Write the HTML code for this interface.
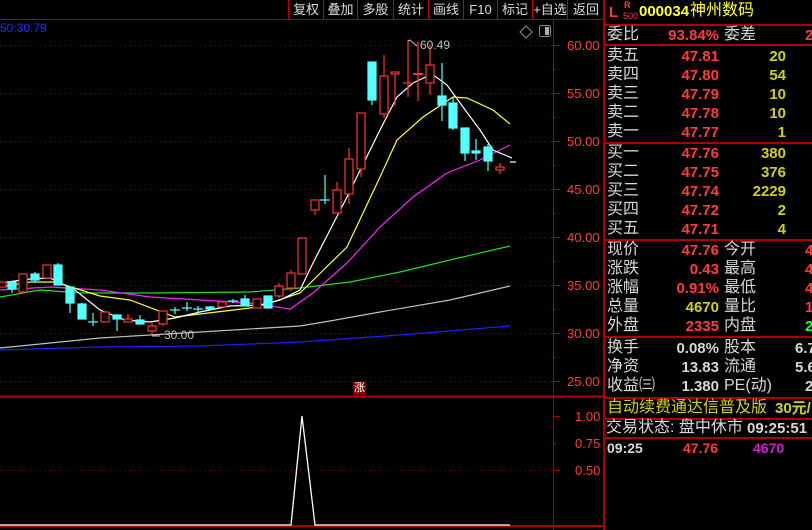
<!DOCTYPE html>
<html><head><meta charset="utf-8">
<style>
*{margin:0;padding:0;box-sizing:border-box}
body{width:812px;height:530px;background:#000;overflow:hidden;position:relative;font-family:"Liberation Sans","Noto Sans CJK SC",sans-serif;}
.t{position:absolute;white-space:nowrap;line-height:1;}
.tb{position:absolute;top:0;height:19px;color:#ddd;font-size:13px;line-height:19px;text-align:center;border-left:1px solid #c00;}
.lab{position:absolute;left:607px;color:#d8d8d8;font-size:16px;line-height:1;}
.lab2{position:absolute;left:724px;color:#d8d8d8;font-size:16px;line-height:1;}
.v{position:absolute;right:93px;font-size:15px;font-weight:bold;line-height:1;text-align:right;}
.n{position:absolute;right:26px;font-size:15px;font-weight:bold;line-height:1;text-align:right;color:#d0d020;}
.c{position:absolute;left:805px;font-size:15px;font-weight:bold;line-height:1;}
.hl{position:absolute;left:604px;width:208px;height:2px;background:#b00000;}
.r{color:#ff3c3c}.y{color:#d0d020}.w{color:#d8d8d8}.g{color:#20ff20}.m{color:#d020d0}
</style></head><body>
<svg width="812" height="530" style="position:absolute;left:0;top:0">
<g stroke="#800000" stroke-width="1" stroke-dasharray="1,4">
<line x1="0" y1="45.5" x2="553" y2="45.5"/><line x1="0" y1="93.5" x2="553" y2="93.5"/>
<line x1="0" y1="141.5" x2="553" y2="141.5"/><line x1="0" y1="189.5" x2="553" y2="189.5"/>
<line x1="0" y1="237.5" x2="553" y2="237.5"/><line x1="0" y1="285.5" x2="553" y2="285.5"/>
<line x1="0" y1="333.5" x2="553" y2="333.5"/><line x1="0" y1="381.5" x2="553" y2="381.5"/>
<line x1="0" y1="470.5" x2="553" y2="470.5"/>
</g>
<line x1="0" y1="19.5" x2="604" y2="19.5" stroke="#b00000"/>
<line x1="0" y1="396.5" x2="604" y2="396.5" stroke="#b00000" stroke-width="2"/>
<line x1="0" y1="526" x2="604" y2="526" stroke="#b00000" stroke-width="2"/>
<line x1="553.5" y1="19" x2="553.5" y2="530" stroke="#b00000"/>
<line x1="604" y1="0" x2="604" y2="530" stroke="#b00000" stroke-width="2"/>
<g stroke="#b00000">
<line x1="553" y1="45.5" x2="560" y2="45.5"/><line x1="553" y1="93.5" x2="560" y2="93.5"/>
<line x1="553" y1="141.5" x2="560" y2="141.5"/><line x1="553" y1="189.5" x2="560" y2="189.5"/>
<line x1="553" y1="237.5" x2="560" y2="237.5"/><line x1="553" y1="285.5" x2="560" y2="285.5"/>
<line x1="553" y1="333.5" x2="560" y2="333.5"/><line x1="553" y1="381.5" x2="560" y2="381.5"/>
<line x1="553" y1="416.5" x2="560" y2="416.5"/><line x1="553" y1="470.5" x2="560" y2="470.5"/>
<line x1="553" y1="69.5" x2="556" y2="69.5"/><line x1="553" y1="117.5" x2="556" y2="117.5"/>
<line x1="553" y1="165.5" x2="556" y2="165.5"/><line x1="553" y1="213.5" x2="556" y2="213.5"/>
<line x1="553" y1="261.5" x2="556" y2="261.5"/><line x1="553" y1="309.5" x2="556" y2="309.5"/>
<line x1="553" y1="357.5" x2="556" y2="357.5"/><line x1="553" y1="443.5" x2="556" y2="443.5"/>
</g>
<!-- icons -->
<path d="M526 26 L532 32 L526 38 L520 32 Z" fill="none" stroke="#909090"/>
<rect x="539.5" y="25.5" width="11" height="11" rx="2" fill="none" stroke="#909090"/>
<rect x="545" y="27" width="4" height="8" fill="#b0b0b0"/>
<!-- MA lines -->
<g fill="none" stroke-width="1.2">
<polyline stroke="#c0c0c0" points="0,348 100,338 200,332 300,326 330,321 380,312 450,300 510,286"/>
<polyline stroke="#2020ff" points="0,350 100,347 200,346 300,342 400,335 510,326"/>
<polyline stroke="#20e020" points="0,297 40,290 80,293 150,293 250,292 300,288 350,282 400,272 450,260 510,246"/>
<polyline stroke="#ff20ff" points="0,290 50,287 100,290 150,297 200,300 250,303 290,309 313,293 347,263 380,227 413,197 447,173 480,160 510,145"/>
<polyline stroke="#ffff30" points="0,287 30,282 55,282 100,296 130,300 175,317 200,314 250,308 270,303 300,293 347,247 380,177 397,140 423,117 453,97 467,98 493,110 510,124"/>
<polyline stroke="#ffffff" points="0,283 30,279 50,278 75,290 100,310 125,320 150,322 175,318 200,312 230,306 260,305 280,300 300,290 313,263 347,197 380,130 397,97 413,83 432,74 447,85 463,107 480,130 493,150 512,158"/>
</g>
<!-- candles -->
<g stroke-width="1.2">
<g stroke="#ff3232" fill="#000">
<rect x="-2" y="282" width="8" height="5"/>
<rect x="19" y="274" width="8" height="18"/>
<rect x="43" y="265" width="8" height="13"/>
<rect x="101" y="312" width="8" height="10"/>
<line x1="128" y1="314" x2="128" y2="319"/><rect x="124" y="319" width="8" height="3"/>
<line x1="152" y1="323" x2="152" y2="334"/><rect x="148" y="326" width="8" height="5"/>
<line x1="163" y1="324" x2="163" y2="326"/><rect x="159" y="311" width="8" height="13"/>
<rect x="218" y="302" width="8" height="5"/>
<rect x="253" y="299" width="8" height="9"/>
<line x1="279" y1="283" x2="279" y2="298"/><rect x="275" y="286" width="8" height="10"/>
<line x1="291" y1="270" x2="291" y2="291"/><rect x="287" y="273" width="8" height="15"/>
<rect x="298" y="238" width="8" height="36"/>
<line x1="315" y1="210" x2="315" y2="215"/><rect x="311" y="200" width="8" height="10"/>
<line x1="337" y1="182" x2="337" y2="190"/><rect x="333" y="190" width="8" height="23"/>
<line x1="349" y1="148" x2="349" y2="204"/><rect x="345" y="159" width="8" height="35"/>
<line x1="361" y1="169" x2="361" y2="177"/><rect x="357" y="113" width="8" height="56"/>
<line x1="384" y1="55" x2="384" y2="118"/><rect x="380" y="76" width="8" height="38"/>
<line x1="395" y1="72" x2="395" y2="105"/><rect x="391" y="72" width="8" height="2"/>
<line x1="408" y1="40" x2="408" y2="97"/><line x1="403" y1="83" x2="413" y2="83"/>
<line x1="418" y1="42" x2="418" y2="101"/><line x1="413" y1="74" x2="423" y2="74" stroke-width="2"/>
<line x1="430" y1="45" x2="430" y2="95"/><rect x="426" y="65" width="8" height="18"/>
<line x1="500" y1="163" x2="500" y2="174"/><rect x="496" y="167" width="8" height="3"/>
</g>
<g stroke="#54ffff" fill="#54ffff">
<line x1="12" y1="282" x2="12" y2="293"/><rect x="8" y="282" width="8" height="7"/>
<line x1="35" y1="272" x2="35" y2="283"/><rect x="31" y="274" width="8" height="6"/>
<line x1="58" y1="263" x2="58" y2="285"/><rect x="54" y="265" width="8" height="20"/>
<line x1="70" y1="287" x2="70" y2="313"/><rect x="66" y="287" width="8" height="16"/>
<line x1="82" y1="303" x2="82" y2="319"/><rect x="78" y="304" width="8" height="15"/>
<line x1="93" y1="313" x2="93" y2="326"/><line x1="88" y1="322" x2="98" y2="322"/>
<line x1="117" y1="315" x2="117" y2="331"/><rect x="113" y="315" width="8" height="4"/>
<line x1="140" y1="315" x2="140" y2="324"/><rect x="136" y="320" width="8" height="4"/>
<line x1="175" y1="307" x2="175" y2="314"/><line x1="170" y1="310" x2="180" y2="310"/>
<line x1="187" y1="302" x2="187" y2="311"/><line x1="182" y1="308" x2="192" y2="308"/>
<line x1="198" y1="306" x2="198" y2="314"/><line x1="193" y1="309" x2="203" y2="309"/>
<line x1="210" y1="306" x2="210" y2="309"/><rect x="206" y="307" width="8" height="2"/>
<line x1="233" y1="299" x2="233" y2="303"/><line x1="228" y1="301" x2="238" y2="301"/>
<line x1="245" y1="295" x2="245" y2="306"/><rect x="241" y="299" width="8" height="7"/>
<rect x="264" y="296" width="8" height="12"/>
<line x1="325" y1="175" x2="325" y2="204"/><line x1="320" y1="200" x2="330" y2="200"/>
<line x1="372" y1="62" x2="372" y2="105"/><rect x="368" y="62" width="8" height="38"/>
<line x1="442" y1="63" x2="442" y2="121"/><rect x="438" y="96" width="8" height="9"/>
<line x1="453" y1="98" x2="453" y2="130"/><rect x="449" y="103" width="8" height="25"/>
<line x1="465" y1="128" x2="465" y2="161"/><rect x="461" y="128" width="8" height="25"/>
<line x1="476" y1="139" x2="476" y2="160"/><rect x="472" y="151" width="8" height="2"/>
<line x1="488" y1="144" x2="488" y2="171"/><rect x="484" y="147" width="8" height="14"/>
</g>
<line x1="510" y1="162" x2="516" y2="162" stroke="#fff"/>
</g>
<!-- markers -->
<polyline points="408,41 410,40 417,46" fill="none" stroke="#c0c0c0"/>
<polyline points="152,336 160,336" fill="none" stroke="#c0c0c0"/>
<!-- spike -->
<polyline points="0,525 291,525 302,416 315,525 510,525" fill="none" stroke="#fff" stroke-width="1.3"/>
<rect x="353" y="382" width="13" height="13" fill="#8a0000"/>
</svg>

<div class="t" style="left:0;top:22px;color:#2828ff;font-size:12px">50:30.79</div>
<div class="t" style="left:420px;top:39px;color:#c0c0c0;font-size:12px">60.49</div>
<div class="t" style="left:164px;top:329px;color:#c0c0c0;font-size:12px">30.00</div>
<div class="t" style="left:354px;top:383px;color:#fff;font-size:11px">涨</div>

<div class="t r" style="left:567px;top:39px;font-size:13px">60.00</div>
<div class="t r" style="left:567px;top:87px;font-size:13px">55.00</div>
<div class="t r" style="left:567px;top:135px;font-size:13px">50.00</div>
<div class="t r" style="left:567px;top:183px;font-size:13px">45.00</div>
<div class="t r" style="left:567px;top:231px;font-size:13px">40.00</div>
<div class="t r" style="left:567px;top:279px;font-size:13px">35.00</div>
<div class="t r" style="left:567px;top:327px;font-size:13px">30.00</div>
<div class="t r" style="left:567px;top:375px;font-size:13px">25.00</div>
<div class="t r" style="left:575px;top:410px;font-size:13px">1.00</div>
<div class="t r" style="left:575px;top:437px;font-size:13px">0.75</div>
<div class="t r" style="left:575px;top:464px;font-size:13px">0.50</div>

<div class="tb" style="left:288px;width:35px">复权</div>
<div class="tb" style="left:323px;width:34px">叠加</div>
<div class="tb" style="left:357px;width:36px">多股</div>
<div class="tb" style="left:393px;width:35px">统计</div>
<div class="tb" style="left:428px;width:35px">画线</div>
<div class="tb" style="left:463px;width:34px">F10</div>
<div class="tb" style="left:497px;width:35px">标记</div>
<div class="tb" style="left:532px;width:35px">+自选</div>
<div class="tb" style="left:567px;width:37px">返回</div>

<!-- right panel -->
<div class="t r" style="left:609px;top:5px;font-size:15px;font-weight:bold">L</div>
<div class="t r" style="left:624px;top:1px;font-size:9px;font-weight:bold">R</div>
<div class="t r" style="left:623px;top:12px;font-size:9px">500</div>
<div class="t" style="left:639px;top:4px;font-size:15px;font-weight:bold;color:#ffff30">000034</div>
<div class="t" style="left:690px;top:3px;font-size:16px;color:#ffff30">神州数码</div>
<div class="hl" style="top:24px"></div>
<div class="lab" style="top:27px">委比</div><div class="v r" style="top:28px">93.84%</div>
<div class="lab2" style="top:27px">委差</div><div class="c r" style="top:28px">2</div>
<div class="hl" style="top:44px"></div>
<div class="lab" style="top:48px">卖五</div><div class="v r" style="top:49px">47.81</div><div class="n" style="top:49px">20</div>
<div class="lab" style="top:67px">卖四</div><div class="v r" style="top:68px">47.80</div><div class="n" style="top:68px">54</div>
<div class="lab" style="top:86px">卖三</div><div class="v r" style="top:87px">47.79</div><div class="n" style="top:87px">10</div>
<div class="lab" style="top:105px">卖二</div><div class="v r" style="top:106px">47.78</div><div class="n" style="top:106px">10</div>
<div class="lab" style="top:124px">卖一</div><div class="v r" style="top:125px">47.77</div><div class="n" style="top:125px">1</div>
<div class="hl" style="top:142px"></div>
<div class="lab" style="top:145px">买一</div><div class="v r" style="top:146px">47.76</div><div class="n" style="top:146px">380</div>
<div class="lab" style="top:164px">买二</div><div class="v r" style="top:165px">47.75</div><div class="n" style="top:165px">376</div>
<div class="lab" style="top:183px">买三</div><div class="v r" style="top:184px">47.74</div><div class="n" style="top:184px">2229</div>
<div class="lab" style="top:202px">买四</div><div class="v r" style="top:203px">47.72</div><div class="n" style="top:203px">2</div>
<div class="lab" style="top:221px">买五</div><div class="v r" style="top:222px">47.71</div><div class="n" style="top:222px">4</div>
<div class="hl" style="top:239px"></div>
<div class="lab" style="top:242px">现价</div><div class="v r" style="top:243px">47.76</div><div class="lab2" style="top:242px">今开</div><div class="c r" style="top:243px">4</div>
<div class="lab" style="top:261px">涨跌</div><div class="v r" style="top:262px">0.43</div><div class="lab2" style="top:261px">最高</div><div class="c r" style="top:262px">4</div>
<div class="lab" style="top:280px">涨幅</div><div class="v r" style="top:281px">0.91%</div><div class="lab2" style="top:280px">最低</div><div class="c r" style="top:281px">4</div>
<div class="lab" style="top:299px">总量</div><div class="v y" style="top:300px">4670</div><div class="lab2" style="top:299px">量比</div><div class="c r" style="top:300px">1</div>
<div class="lab" style="top:318px">外盘</div><div class="v r" style="top:319px">2335</div><div class="lab2" style="top:318px">内盘</div><div class="c g" style="top:319px">2</div>
<div class="hl" style="top:336px"></div>
<div class="lab" style="top:340px">换手</div><div class="v w" style="top:341px">0.08%</div><div class="lab2" style="top:340px">股本</div><div class="c w" style="top:341px;left:795px">6.7</div>
<div class="lab" style="top:359px">净资</div><div class="v w" style="top:360px">13.83</div><div class="lab2" style="top:359px">流通</div><div class="c w" style="top:360px;left:795px">5.6</div>
<div class="lab" style="top:378px">收益㈢</div><div class="v w" style="top:379px">1.380</div><div class="lab2" style="top:378px">PE(动)</div><div class="c w" style="top:379px">2</div>
<div class="hl" style="top:397px"></div>
<div class="t y" style="left:607px;top:400px;font-size:16px">自动续费通达信普及版</div>
<div class="t y" style="left:775px;top:401px;font-size:15px;font-weight:bold">30元/</div>
<div class="hl" style="top:418px"></div>
<div class="t w" style="left:606px;top:420px;font-size:16px">交易状态: 盘中休市</div>
<div class="t w" style="left:747px;top:421px;font-size:15px;font-weight:bold">09:25:51</div>
<div class="hl" style="top:437px"></div>
<div class="t w" style="left:607px;top:441px;font-size:14px;font-weight:bold">09:25</div>
<div class="t r" style="left:683px;top:441px;font-size:14px;font-weight:bold">47.76</div>
<div class="t m" style="left:753px;top:441px;font-size:14px;font-weight:bold">4670</div>
</body></html>
